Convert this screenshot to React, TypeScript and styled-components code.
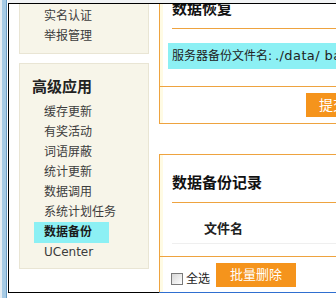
import React from "react";
import styled, { createGlobalStyle } from "styled-components";

const GlobalStyle = createGlobalStyle`
  html, body { margin: 0; padding: 0; background: #fff; }
  body {
    width: 336px;
    height: 298px;
    overflow: hidden;
    font-family: "DejaVu Sans", "Noto Sans CJK SC", sans-serif;
    color: #333;
  }
  * { box-sizing: border-box; }
`;

const ORANGE_LINE = "#eea33f";
const ORANGE_BTN = "#f5941c";
const CYAN = "#8cf0f4";
const CREAM = "#f7f5e9";
const CREAM_BORDER = "#e9e5d4";

const Page = styled.div`
  display: flex;
  width: 336px;
  height: 298px;
  background: #fff;
`;

const BlueEdge = styled.div`
  flex: 0 0 8px;
  background: linear-gradient(
    to right,
    #e6edf3 0 2px,
    #a7cbe5 2px 6px,
    #6c9ec6 6px 7px,
    #ffffff 7px 8px
  );
`;

const Stage = styled.div`
  flex: 0 0 323px;
  display: flex;
  flex-direction: column;
`;

const TopStrip = styled.div`
  height: 3px;
  background: #f1f3f5;
`;

const Frame = styled.div`
  display: flex;
  height: 290px;
  border-top: 1px solid #000;
  border-left: 1px solid #000;
  border-right: 1px solid #000;
`;

const Sidebar = styled.div`
  flex: 0 0 150px;
  border-bottom: 1px solid #000;
  overflow: hidden;
  background: #fff;
`;

const MenuBox = styled.div<{ $cut?: boolean }>`
  margin: ${(p) => (p.$cut ? "0 10px" : "9px 10px 0")};
  background: ${CREAM};
  border: 1px solid ${CREAM_BORDER};
  border-top: ${(p) => (p.$cut ? "none" : `1px solid ${CREAM_BORDER}`)};
  padding: ${(p) => (p.$cut ? "2px 0 7px" : "13px 0 6px")};
`;

const MenuTitle = styled.div`
  padding-left: 12px;
  margin-bottom: 5px;
  line-height: 20px;
  font-size: 15px;
  font-weight: bold;
  color: #222;
`;

const MenuItem = styled.div<{ $active?: boolean }>`
  display: block;
  height: 20px;
  line-height: 20px;
  font-size: 12px;
  color: ${(p) => (p.$active ? "#1a1a1a" : "#3c3c3c")};
  font-weight: ${(p) => (p.$active ? "bold" : "normal")};
  white-space: nowrap;
  ${(p) =>
    p.$active
      ? `
    margin-left: 14px;
    width: 75px;
    padding-left: 10px;
    height: 21px;
    line-height: 21px;
    margin-bottom: -1px;
    background: ${CYAN};
  `
      : `padding-left: 24px;`}
`;

const Main = styled.div`
  flex: 1;
  display: flex;
  flex-direction: column;
  border-bottom: 1px solid #2f6fd0;
  overflow: hidden;
  background: #fff;
`;

const Panel = styled.div<{ $grow?: boolean }>`
  border-left: 1px solid ${ORANGE_LINE};
  box-shadow: inset 3px 0 0 #fffbe4;
  ${(p) =>
    p.$grow
      ? `flex: 1; border-top: 1px solid ${ORANGE_LINE}; margin-top: 30px;`
      : `border-bottom: 1px solid ${ORANGE_LINE};`}
`;

const PanelTitle = styled.div<{ $top?: boolean }>`
  margin: ${(p) => (p.$top ? "-5px 0 0 12px" : "0 0 0 12px")};
  padding: ${(p) => (p.$top ? "0 0 9px" : "18px 0 9px")};
  line-height: 20px;
  font-size: 15px;
  font-weight: bold;
  color: #111;
  border-bottom: 1px solid ${ORANGE_LINE};
  white-space: nowrap;
`;

const InfoRow = styled.div`
  margin: 14px 0 0 8px;
  height: 26px;
  line-height: 26px;
  padding-left: 4px;
  background: ${CYAN};
  font-size: 12px;
  color: #222;
  white-space: nowrap;
  overflow: hidden;
`;

const PathText = styled.span`
  font-size: 13px;
  margin-left: 3px;
  letter-spacing: 0.4px;
`;

const Divider = styled.div<{ $gap: number }>`
  margin-top: ${(p) => p.$gap}px;
  border-top: 1px solid ${ORANGE_LINE};
`;

const SubmitRow = styled.div`
  display: flex;
  padding: 6px 0 6px 146px;
`;

const OrangeButton = styled.div<{ $w: number; $size: number }>`
  flex: 0 0 ${(p) => p.$w}px;
  height: 24px;
  line-height: 24px;
  text-align: center;
  background: ${ORANGE_BTN};
  color: #fff;
  font-size: ${(p) => p.$size}px;
  white-space: nowrap;
`;

const HeaderCell = styled.div`
  margin-left: 12px;
  padding: 16px 0 4px 32px;
  line-height: 20px;
  font-size: 13px;
  font-weight: bold;
  color: #222;
  border-bottom: 1px solid #efefef;
`;

const FooterRow = styled.div`
  display: flex;
  align-items: flex-start;
  padding: 6px 0 0 11px;
`;

const CheckLabel = styled.label`
  display: flex;
  align-items: center;
  margin-top: 9px;
  font-size: 12px;
  line-height: 14px;
  color: #222;
`;

const CheckBox = styled.span`
  display: inline-block;
  width: 12px;
  height: 12px;
  border: 1px solid #7a7a7a;
  background: linear-gradient(135deg, #d6d6d6, #ffffff);
  margin-right: 3px;
`;

const FooterButton = styled(OrangeButton)`
  margin-left: 6px;
`;

const topItems = ["实名认证", "举报管理"];
const advItems = [
  "缓存更新",
  "有奖活动",
  "词语屏蔽",
  "统计更新",
  "数据调用",
  "系统计划任务",
  "数据备份",
  "UCenter",
];

export default function App() {
  return (
    <>
      <GlobalStyle />
      <Page>
        <BlueEdge />
        <Stage>
          <TopStrip />
          <Frame>
            <Sidebar>
              <MenuBox $cut>
                {topItems.map((t) => (
                  <MenuItem key={t}>{t}</MenuItem>
                ))}
              </MenuBox>
              <MenuBox>
                <MenuTitle>高级应用</MenuTitle>
                {advItems.map((t) => (
                  <MenuItem key={t} $active={t === "数据备份"}>
                    {t}
                  </MenuItem>
                ))}
              </MenuBox>
            </Sidebar>
            <Main>
              <Panel>
                <PanelTitle $top>数据恢复</PanelTitle>
                <InfoRow>
                  服务器备份文件名:<PathText>./data/ backup_5e2a1c/</PathText>
                </InfoRow>
                <Divider $gap={17} />
                <SubmitRow>
                  <OrangeButton $w={54} $size={14}>
                    提交
                  </OrangeButton>
                </SubmitRow>
              </Panel>
              <Panel $grow>
                <PanelTitle>数据备份记录</PanelTitle>
                <HeaderCell>文件名</HeaderCell>
                <Divider $gap={12} />
                <FooterRow>
                  <CheckLabel>
                    <CheckBox />
                    全选
                  </CheckLabel>
                  <FooterButton $w={80} $size={13}>
                    批量删除
                  </FooterButton>
                </FooterRow>
              </Panel>
            </Main>
          </Frame>
        </Stage>
      </Page>
    </>
  );
}
